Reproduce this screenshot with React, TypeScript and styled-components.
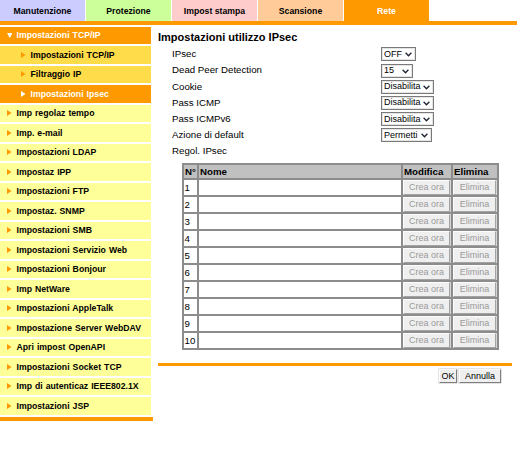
import React from "react";
import styled, { createGlobalStyle } from "styled-components";

const ORANGE = "#ff9900";

const GlobalStyle = createGlobalStyle`
  html, body { margin: 0; padding: 0; background: #fff; }
  body { font-family: "Liberation Sans", Arial, sans-serif; color: #000; }
  * { box-sizing: border-box; }
`;

const Page = styled.div`
  width: 517px;
  height: 450px;
  overflow: hidden;
  background: #fff;
`;

const TabBar = styled.div`
  display: flex;
  gap: 1px;
  height: 21px;
`;

const Tab = styled.div<{ $bg: string; $active?: boolean }>`
  width: 85px;
  flex: none;
  background: ${(p) => p.$bg};
  display: flex;
  align-items: center;
  justify-content: center;
  font-size: 8.7px;
  font-weight: bold;
  color: ${(p) => (p.$active ? "#fff" : "#000")};
`;

const Band = styled.div`
  height: 4px;
  background: ${ORANGE};
`;

const Body = styled.div`
  display: flex;
  margin-top: 1.5px;
`;

const Sidebar = styled.nav`
  width: 153px;
  flex: none;
  display: flex;
  flex-direction: column;
  gap: 2px;
`;

type Variant = "open" | "sub" | "subActive" | "top";

const navBg: Record<Variant, string> = {
  open: ORANGE,
  sub: "#ffdc4a",
  subActive: ORANGE,
  top: "#ffff99",
};

const navPad: Record<Variant, number> = {
  open: 6.5,
  sub: 21,
  subActive: 21,
  top: 7,
};

const NavItem = styled.div<{ $variant: Variant }>`
  width: 151px;
  height: 17.5px;
  display: flex;
  align-items: center;
  gap: ${(p) => (p.$variant === "open" ? 4.5 : 5)}px;
  padding-left: ${(p) => navPad[p.$variant]}px;
  background: ${(p) => navBg[p.$variant]};
  color: ${(p) => (p.$variant === "open" || p.$variant === "subActive" ? "#fff" : "#000")};
  font-size: 8.7px;
  font-weight: bold;
  white-space: nowrap;
  word-spacing: 0.6px;
`;

const SidebarEnd = styled.div`
  width: 153px;
  height: 3.5px;
  margin-top: 0.5px;
  background: ${ORANGE};
`;

const Main = styled.main`
  width: 354px;
  margin-left: 5px;
  padding-top: 2px;
`;

const Title = styled.h1`
  margin: 0;
  font-size: 11px;
  line-height: 16px;
  font-weight: bold;
`;

const Form = styled.div`
  display: grid;
  grid-template-columns: 209px auto;
  grid-auto-rows: 16.2px;
  padding-left: 14px;
  margin-top: 1.8px;
`;

const Label = styled.div`
  font-size: 9.7px;
  line-height: 16.2px;
  white-space: nowrap;
`;

const SelectBox = styled.div<{ $w: number }>`
  align-self: center;
  width: ${(p) => p.$w}px;
  height: 14px;
  border: 1px solid #7a7a7a;
  box-shadow: inset 0 0 0 1px #e4e4e4;
  background: #fff;
  display: flex;
  align-items: center;
  justify-content: space-between;
  padding: 0 3px 1px 2px;
  font-size: 9px;
  line-height: 12px;
  color: #000;
`;

const Chevron = () => (
  <svg width="7" height="5" viewBox="0 0 7 5" style={{ marginTop: 2 }}>
    <polyline points="0.6,0.8 3.5,3.8 6.4,0.8" fill="none" stroke="#1f2433" strokeWidth="1.3" />
  </svg>
);

const Select = ({ value, w }: { value: string; w: number }) => (
  <SelectBox $w={w}>
    <span>{value}</span>
    <Chevron />
  </SelectBox>
);

const Grid = styled.div`
  display: grid;
  width: 317px;
  margin: 3px 0 0 24px;
  padding: 2px;
  gap: 2px;
  background: #8c8c8c;
  grid-template-columns: 13px 202px 48px 44px;
  grid-template-rows: 13px repeat(10, 15px);
`;

const HeadCell = styled.div`
  background: #c0c0c0;
  font-size: 9.7px;
  font-weight: bold;
  line-height: 13px;
  padding-left: 1px;
  white-space: nowrap;
  overflow: visible;
`;

const Cell = styled.div`
  background: #fff;
  font-size: 9.7px;
  line-height: 15px;
  padding-left: 0.5px;
  white-space: nowrap;
`;

const BtnCell = styled.div`
  background: #d6d6d6;
  display: flex;
`;

const CellButton = styled.button`
  flex: 1;
  margin: 0 1px 0 0;
  padding: 0;
  background: #efefef;
  border: 1px solid;
  border-color: #fdfdfd #a3a3a3 #a3a3a3 #fdfdfd;
  font-family: "Liberation Sans", Arial, sans-serif;
  font-size: 9px;
  color: #9a9a9a;
`;

const FooterLine = styled.div`
  height: 3.5px;
  background: ${ORANGE};
  margin-top: 13px;
`;

const Actions = styled.div`
  display: flex;
  justify-content: flex-end;
  gap: 2px;
  padding-right: 11px;
  margin-top: 2.5px;
`;

const ActionButton = styled.button<{ $w: number }>`
  width: ${(p) => p.$w}px;
  height: 14px;
  padding: 0;
  background: #efefef;
  border: 1px solid;
  border-color: #fdfdfd #7e7e7e #7e7e7e #fdfdfd;
  box-shadow: 0 0 0 0.5px #c8c8c8;
  font-family: "Liberation Sans", Arial, sans-serif;
  font-size: 9px;
  color: #000;
`;

const RightArrow = ({ color }: { color: string }) => (
  <svg width="4.5" height="6" viewBox="0 0 4.5 6">
    <polygon points="0,0 4.5,3 0,6" fill={color} />
  </svg>
);

const DownArrow = () => (
  <svg width="5.5" height="5" viewBox="0 0 5.5 5">
    <polygon points="0,0 5.5,0 2.75,5" fill="#fff" />
  </svg>
);

const tabs = [
  { label: "Manutenzione", bg: "#ccccff" },
  { label: "Protezione", bg: "#ccff99" },
  { label: "Impost stampa", bg: "#ffcccc" },
  { label: "Scansione", bg: "#ffcc99" },
  { label: "Rete", bg: ORANGE, active: true },
];

const subItems: { label: string; active?: boolean }[] = [
  { label: "Impostazioni TCP/IP" },
  { label: "Filtraggio IP" },
  { label: "Impostazioni Ipsec", active: true },
];

const topItems = [
  "Imp regolaz tempo",
  "Imp. e-mail",
  "Impostazioni LDAP",
  "Impostaz IPP",
  "Impostazioni FTP",
  "Impostaz. SNMP",
  "Impostazioni SMB",
  "Impostazioni Servizio Web",
  "Impostazioni Bonjour",
  "Imp NetWare",
  "Impostazioni AppleTalk",
  "Impostazione Server WebDAV",
  "Apri impost OpenAPI",
  "Impostazioni Socket TCP",
  "Imp di autenticaz IEEE802.1X",
  "Impostazioni JSP",
];

const fields = [
  { label: "IPsec", value: "OFF", w: 35 },
  { label: "Dead Peer Detection", value: "15", w: 32 },
  { label: "Cookie", value: "Disabilita", w: 53 },
  { label: "Pass ICMP", value: "Disabilita", w: 53 },
  { label: "Pass ICMPv6", value: "Disabilita", w: 53 },
  { label: "Azione di default", value: "Permetti", w: 51 },
];

export default function App() {
  return (
    <Page>
      <GlobalStyle />
      <TabBar>
        {tabs.map((t) => (
          <Tab key={t.label} $bg={t.bg} $active={t.active}>
            {t.label}
          </Tab>
        ))}
      </TabBar>
      <Band />
      <Body>
        <Sidebar>
          <NavItem $variant="open">
            <DownArrow />
            Impostazioni TCP/IP
          </NavItem>
          {subItems.map((s) => (
            <NavItem key={s.label} $variant={s.active ? "subActive" : "sub"}>
              <RightArrow color={s.active ? "#fff" : ORANGE} />
              {s.label}
            </NavItem>
          ))}
          {topItems.map((s) => (
            <NavItem key={s} $variant="top">
              <RightArrow color={ORANGE} />
              {s}
            </NavItem>
          ))}
          <SidebarEnd />
        </Sidebar>
        <Main>
          <Title>Impostazioni utilizzo IPsec</Title>
          <Form>
            {fields.map((f) => (
              <React.Fragment key={f.label}>
                <Label>{f.label}</Label>
                <Select value={f.value} w={f.w} />
              </React.Fragment>
            ))}
            <Label>Regol. IPsec</Label>
          </Form>
          <Grid>
            <HeadCell>N°</HeadCell>
            <HeadCell>Nome</HeadCell>
            <HeadCell>Modifica</HeadCell>
            <HeadCell>Elimina</HeadCell>
            {Array.from({ length: 10 }, (_, i) => (
              <React.Fragment key={i}>
                <Cell>{i + 1}</Cell>
                <Cell />
                <BtnCell>
                  <CellButton disabled>Crea ora</CellButton>
                </BtnCell>
                <BtnCell>
                  <CellButton disabled>Elimina</CellButton>
                </BtnCell>
              </React.Fragment>
            ))}
          </Grid>
          <FooterLine />
          <Actions>
            <ActionButton $w={18}>OK</ActionButton>
            <ActionButton $w={42}>Annulla</ActionButton>
          </Actions>
        </Main>
      </Body>
    </Page>
  );
}
